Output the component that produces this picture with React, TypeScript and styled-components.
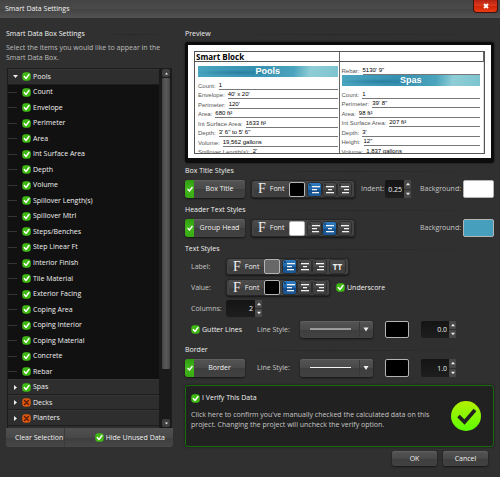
import React from 'react';
import styled, { createGlobalStyle, css } from 'styled-components';

const Global = createGlobalStyle`
  * { box-sizing: border-box; }
  html, body { margin: 0; background: #303030; }
  body, button, input, select {
    font-family: "Open Sans", "Noto Sans", sans-serif;
    font-size: 7px;
    line-height: 10px;
    color: #d6d6d6;
  }
  h1, h2, p, ul { margin: 0; padding: 0; font-size: 7px; font-weight: 400; }
  ul { list-style: none; }
  button { border: 0; padding: 0; cursor: pointer; }
`;

const raised = css`
  background: linear-gradient(#545454, #494949 50%, #3e3e3e 52%, #424242);
  box-shadow: 0 1px 2px #151515, inset 0 1px 0 #606060;
`;

const Window = styled.main`
  min-height: 100vh;
  display: flex;
  flex-direction: column;
  background: #303030;
`;

const TitleBar = styled.header`
  height: 18px;
  display: flex;
  align-items: center;
  justify-content: space-between;
  padding: 0 2px 0 5px;
  color: #f4f4f4;
  background: linear-gradient(#444, #4a4a4a 48%, #424242 50%, #535353);
`;

const CloseButton = styled.button`
  align-self: flex-start;
  width: 25px;
  height: 13px;
  display: grid;
  place-items: center;
  border: 1px solid #3a1410;
  border-top: 0;
  border-radius: 0 0 4px 4px;
  background: linear-gradient(#b32212, #e03a1c 50%, #cf2408 52%, #ea3c14);
`;

const Body = styled.div`
  flex: 1;
  display: flex;
  align-items: flex-start;
  gap: 12px;
  padding: 10px 6px 0;
`;

const Sidebar = styled.section`
  flex: 0 0 167px;
`;

const Heading = styled.h2`
  height: 12px;
  line-height: 12px;
  display: flex;
  align-items: center;
  gap: 16px;
  color: #f0f0f0;
  white-space: nowrap;
  &::after {
    content: '';
    flex: 1;
    height: 1px;
    background: linear-gradient(90deg, #303030, #282828 40%, #303030);
  }
`;

const Hint = styled.p`
  margin: 3px 0 5px;
  color: #bdbdbd;
`;

const Tree = styled.div`
  display: flex;
  height: 360px;
  margin: 0 1px;
  border: 1px solid #1c1c1c;
  border-bottom: 0;
  background: #111;
  overflow: hidden;
`;

const TreeScroll = styled.div`
  flex: 1;
  min-width: 0;
  height: 359px;
  overflow: hidden;
`;

const TreeList = styled.ul`
  height: 357px;
  display: grid;
  grid-template-rows: repeat(23, 1fr);
`;

const TreeRow = styled.li<{ $group?: boolean }>`
  display: flex;
  align-items: center;
  ${p => p.$group && css`
    background: #2e2e2e;
    box-shadow: inset 0 -1px 0 #1d1d1d, inset 0 1px 0 #353535;
  `}
`;

const NextRow = styled.div`
  height: 2px;
  background: #2e2e2e;
`;

const Branch = styled.span`
  width: 9px;
  height: 1px;
  margin-right: 5px;
  background: #343434;
`;

const Expander = styled.button`
  width: 14px;
  height: 10px;
  display: grid;
  place-items: center;
  background: none;
`;

const ScrollBar = styled.div`
  width: 12px;
  padding: 0 1px 1px 3px;
  display: flex;
  flex-direction: column;
  background: #1a1a1a;
`;

const ScrollButton = styled.button`
  height: 8px;
  display: grid;
  place-items: center;
  border-radius: 2px;
  background: #3f3f3f;
`;

const ScrollThumb = styled.div`
  flex: 0 0 291px;
  margin: 1px 0 auto;
  border-radius: 1px;
  background: linear-gradient(90deg, #444, #5a5a5a 50%, #444);
`;

const TreeFooter = styled.footer`
  height: 19px;
  display: flex;
  align-items: stretch;
  justify-content: space-between;
  padding-right: 8px;
  border-radius: 0 0 3px 3px;
  background: linear-gradient(#505050, #484848 50%, #3e3e3e 52%, #474747);
`;

const ClearButton = styled.button`
  padding: 0 1px 0 9px;
  border-right: 1px solid #3a3a3a;
  background: none;
  color: #f0f0f0;
`;

const CheckLabel = styled.label<{ $wide?: boolean }>`
  display: inline-flex;
  align-items: center;
  gap: 2px;
  min-width: ${p => (p.$wide ? '66px' : '0')};
  color: #f0f0f0;
  white-space: nowrap;
`;

const CheckWrap = styled.span`
  position: relative;
  display: inline-grid;
  width: 9px;
  height: 9px;
  flex: none;
  svg { display: block; }
`;

const CheckInput = styled.input`
  position: absolute;
  inset: 0;
  width: 100%;
  height: 100%;
  margin: 0;
  opacity: 0;
`;

const Settings = styled.div`
  flex: 1;
  min-width: 0;
  display: flex;
  flex-direction: column;
  gap: 6px;
`;

const Section = styled.section`
  display: flex;
  flex-direction: column;
  gap: 3px;
`;

const PreviewSection = styled.section`
  display: flex;
  flex-direction: column;
  gap: 2px;
  margin-bottom: -4px;
`;

const SubRows = styled.div`
  display: flex;
  flex-direction: column;
  gap: 4px;
  padding-left: 6px;
`;

const Row = styled.div<{ $compact?: boolean }>`
  display: flex;
  align-items: center;
  height: ${p => (p.$compact ? '17px' : '18px')};
`;

const Caption = styled.label<{ $w: number; $end?: boolean }>`
  width: ${p => p.$w}px;
  color: #c6c6c6;
  white-space: nowrap;
  ${p => p.$end && css`margin-left: auto;`}
`;

const IndentCaption = styled(Caption)`
  margin-left: 6px;
`;

const Toggle = styled.div`
  display: flex;
  width: 60px;
  height: 100%;
  margin-right: 6px;
  border-radius: 3px;
  overflow: hidden;
  ${raised}
`;

const ToggleCheck = styled.label`
  position: relative;
  width: 9px;
  display: grid;
  place-items: center;
  background: linear-gradient(#2f9a10, #43b81b 50%, #37a911);
`;

const ToggleButton = styled.button`
  flex: 1;
  color: #f2f2f2;
  background: none;
`;

const ToolGroup = styled.div`
  display: flex;
  align-items: center;
  height: 100%;
  padding: 0 2px;
  border-radius: 3px;
  border: 1px solid #262626;
  background: #444;
  box-shadow: 0 1px 2px #151515;
`;

const FontButton = styled.button`
  width: 35px;
  height: 100%;
  display: flex;
  align-items: center;
  gap: 4px;
  padding-left: 4px;
  color: #f0f0f0;
  background: linear-gradient(#4c4c4c, #444 50%, #3c3c3c 52%, #404040);
`;

const FontMark = styled.span`
  font: 14px/14px "Liberation Serif", serif;
  color: #f0f0f0;
`;

const Swatch = styled.button<{ $fill: string; $w: number }>`
  width: ${p => p.$w}px;
  height: ${p => (p.$w < 20 ? '15px' : '100%')};
  flex: none;
  border: 1px solid #b4b4b4;
  border-radius: 2px;
  background: ${p => p.$fill};
  margin: 0 ${p => (p.$w < 20 ? '2px' : '0')} 0 0;
`;

const AlignButton = styled.button<{ $on?: boolean }>`
  width: 15px;
  height: 15px;
  display: grid;
  place-items: center;
  border: 1px solid #2d2d2d;
  border-radius: 3px;
  background: ${p => (p.$on
    ? 'linear-gradient(#2f7cc4, #1d64a8 50%, #104a86 52%, #1c5c9c)'
    : 'linear-gradient(#4c4c4c, #454545 50%, #3b3b3b 52%, #424242)')};
`;

const CapsButton = styled(AlignButton)`
  width: 17px;
  margin-left: 2px;
  color: #f0f0f0;
  font-weight: 700;
  font-size: 8px;
`;

const Stepper = styled.div<{ $w: number }>`
  display: flex;
  width: ${p => p.$w}px;
  height: 100%;
`;

const StepInput = styled.input`
  flex: 1;
  min-width: 0;
  height: 100%;
  padding: 0 2px 0 0;
  border: 0;
  border-radius: 2px 0 0 2px;
  text-align: right;
  color: #f0f0f0;
  background: linear-gradient(#141414, #1e1e1e);
`;

const StepButtons = styled.div`
  width: 7px;
  display: grid;
  grid-template-rows: 1fr 1fr;
  gap: 1px;
  button {
    display: grid;
    place-items: center;
    border-radius: 1px;
    background: #484848;
  }
`;

const LineSelectBox = styled.div`
  position: relative;
  width: 73px;
  height: 100%;
  margin-right: 12px;
  svg { position: absolute; inset: 0; width: 100%; height: 100%; pointer-events: none; }
`;

const LineSelect = styled.select`
  appearance: none;
  width: 100%;
  height: 100%;
  border: 0;
  border-radius: 3px;
  color: transparent;
  ${raised}
`;

const PreviewFrame = styled.div`
  border: 3px solid #0c0c0c;
  border-bottom-width: 5px;
  border-radius: 3px;
  padding: 6px 6px 4px;
  background: #fff;
  box-shadow: 0 0 2px #111;
`;

const PreviewSheet = styled.div`
  display: grid;
  grid-template-columns: 1fr 1fr;
  grid-template-rows: 10px 1fr;
  height: 103px;
  overflow: hidden;
  border: 1px solid #555;
`;

const SheetTitle = styled.div`
  padding-left: 1px;
  border-bottom: 1px solid #555;
  border-right: 1px solid #666;
  font: 700 8px/9px "Open Sans", sans-serif;
  color: #000;
`;

const SheetColumn = styled.div<{ $left?: boolean }>`
  min-width: 0;
  padding: ${p => (p.$left ? '4px 1px 0 3px' : '3px 3px 0 2px')};
  border-right: 1px solid ${p => (p.$left ? '#666' : '#ddd')};
`;

const Banner = styled.div`
  height: 11px;
  margin: 0 0 3px;
  text-align: center;
  font: 700 9px/11px "Liberation Sans", Arial, sans-serif;
  color: #fff;
  background:
    radial-gradient(ellipse at 30% 60%, #2a7f9f 0, transparent 32%),
    linear-gradient(100deg, #4aa5bf, #3690b0 40%, #4ba4bd 68%, #8fcdd6 80%, #7cc4cf);
`;

const Facts = styled.div<{ $n: number }>`
  display: grid;
  grid-auto-rows: 1fr;
  height: ${p => p.$n}px;
`;

const Fact = styled.div`
  display: flex;
  align-items: flex-end;
  gap: 3px;
  white-space: nowrap;
  font: 6px/8px "Liberation Sans", Arial, sans-serif;
  span { color: #555; }
  b { flex: 1; font-weight: 400; color: #000; border-bottom: 1px solid #777; }
`;

const VerifyBox = styled.section`
  display: flex;
  align-items: center;
  justify-content: space-between;
  height: 62px;
  margin-top: 2px;
  padding: 0 12px 0 5px;
  border: 1px solid #176b0c;
  border-radius: 3px;
  background: #212121;
  box-shadow: 0 0 2px #111;
`;

const VerifyText = styled.div`
  align-self: flex-start;
  padding-top: 7px;
  p { margin-top: 4px; color: #c6c6c6; }
`;

const Actions = styled.div`
  display: flex;
  justify-content: flex-end;
  gap: 6px;
  margin-top: -2px;
  padding-right: 6px;
`;

const ActionButton = styled.button`
  width: 45px;
  height: 15px;
  border-radius: 3px;
  color: #f0f0f0;
  ${raised}
`;

function Tick({ off }: { off?: boolean }) {
  return (
    <svg width="9" height="9" viewBox="0 0 18 18" aria-hidden="true">
      <rect x="0.5" y="0.5" width="17" height="17" rx="6" fill={off ? '#d9570f' : '#3fb911'} />
      {off
        ? <path d="M5 5l8 8M13 5l-8 8" stroke="#5e1c00" strokeWidth="2.6" strokeLinecap="round" />
        : <path d="M4.5 9l3.5 4 6-8" fill="none" stroke="#fff" strokeWidth="2.8" strokeLinecap="round" strokeLinejoin="round" />}
    </svg>
  );
}

function Check({ label, off, wide }: { label: string; off?: boolean; wide?: boolean }) {
  return (
    <CheckLabel $wide={wide}>
      <CheckWrap>
        <Tick off={off} />
        <CheckInput type="checkbox" defaultChecked={!off} />
      </CheckWrap>
      {label}
    </CheckLabel>
  );
}

function Arrow({ dir, size = 5 }: { dir: 'up' | 'down' | 'right'; size?: number }) {
  const d = { up: 'M0 8L5 2l5 6z', down: 'M0 2h10L5 8z', right: 'M2 0l6 5-6 5z' }[dir];
  return <svg width={size} height={size} viewBox="0 0 10 10" aria-hidden="true"><path d={d} fill="#eee" /></svg>;
}

type Align = 'left' | 'center' | 'right';

const alignBars: Record<Align, number[][]> = {
  left: [[3, 8], [3, 5], [3, 7]],
  center: [[2, 8], [4, 4], [2, 8]],
  right: [[2, 8], [5, 5], [3, 7]],
};

function AlignIcon({ kind }: { kind: Align }) {
  return (
    <svg width="12" height="11" viewBox="0 0 12 11" aria-hidden="true">
      <circle cx="1" cy="1" r="0.8" fill="#111" />
      {alignBars[kind].map(([x, w], i) => <rect key={i} x={x} y={2 + i * 3} width={w} height="1.3" fill="#f2f2f2" />)}
    </svg>
  );
}

function FontTools({ color, align, caps }: { color: string; align: Align; caps?: boolean }) {
  return (
    <ToolGroup>
      <FontButton><FontMark aria-hidden="true">F</FontMark>Font</FontButton>
      <Swatch $w={16} $fill={color} aria-label="Font color" />
      {(['left', 'center', 'right'] as Align[]).map(k => (
        <AlignButton key={k} $on={k === align} aria-label={`Align ${k}`}><AlignIcon kind={k} /></AlignButton>
      ))}
      {caps && <CapsButton>TT</CapsButton>}
    </ToolGroup>
  );
}

function NumberStepper({ id, value, width, label }: { id: string; value: string; width: number; label?: string }) {
  return (
    <Stepper $w={width}>
      <StepInput id={id} aria-label={label} defaultValue={value} />
      <StepButtons>
        <button aria-label="Increase"><Arrow dir="up" size={4} /></button>
        <button aria-label="Decrease"><Arrow dir="down" size={4} /></button>
      </StepButtons>
    </Stepper>
  );
}

function SectionToggle({ label }: { label: string }) {
  return (
    <Toggle>
      <ToggleCheck>
        <svg width="8" height="8" viewBox="0 0 16 16" aria-hidden="true">
          <path d="M3 8l4 4 6-8" fill="none" stroke="#fff" strokeWidth="2.6" />
        </svg>
        <CheckInput type="checkbox" defaultChecked aria-label={label} />
      </ToggleCheck>
      <ToggleButton>{label}</ToggleButton>
    </Toggle>
  );
}

function LinePicker({ id }: { id: string }) {
  return (
    <LineSelectBox>
      <LineSelect id={id}><option>Solid</option></LineSelect>
      <svg viewBox="0 0 73 18" preserveAspectRatio="none" aria-hidden="true">
        <path d="M10 8.500h41" stroke="#f4f4f4" strokeWidth="1" />
        <path d="M59.5 1v16" stroke="#383838" />
        <path d="M63.500 7h5l-2.500 4z" fill="#f0f0f0" />
      </svg>
    </LineSelectBox>
  );
}

const poolItems = ['Count', 'Envelope', 'Perimeter', 'Area', 'Int Surface Area', 'Depth', 'Volume',
  'Spillover Length(s)', 'Spillover Mtrl', 'Steps/Benches', 'Step Linear Ft', 'Interior Finish',
  'Tile Material', 'Exterior Facing', 'Coping Area', 'Coping Interior', 'Coping Material', 'Concrete', 'Rebar'];

const poolFacts = [['Count:', '1'], ['Envelope:', "40' x 20'"], ['Perimeter:', "120'"], ['Area:', '680 ft²'],
  ['Int Surface Area:', '1633 ft²'], ['Depth:', `3' 6" to 5' 6"`], ['Volume:', '19,562 gallons'],
  ['Spillover Length(s):', "2'"]];

const spaFacts = [['Count:', '1'], ['Perimeter:', `39' 8"`], ['Area:', '98 ft²'], ['Int Surface Area:', '207 ft²'],
  ['Depth:', "3'"], ['Height:', '12"'], ['Volume:', '1,837 gallons']];

function GroupRow({ label, open, off }: { label: string; open?: boolean; off?: boolean }) {
  return (
    <TreeRow $group>
      <Expander aria-label={`Expand ${label}`}><Arrow dir={open ? 'down' : 'right'} /></Expander>
      <Check label={label} off={off} />
    </TreeRow>
  );
}

export default function App() {
  return (
    <Window>
      <Global />
      <TitleBar>
        <h1>Smart Data Settings</h1>
        <CloseButton aria-label="Close">
          <svg width="6" height="6" viewBox="0 0 6 6"><path d="M1 1l4 4M5 1L1 5" stroke="#fff" strokeWidth="1.8" /></svg>
        </CloseButton>
      </TitleBar>
      <Body>
        <Sidebar>
          <Heading>Smart Data Box Settings</Heading>
          <Hint>Select the items you would like to appear in the Smart Data Box.</Hint>
          <Tree>
            <TreeScroll>
              <TreeList>
                <GroupRow label="Pools" open />
                {poolItems.map(t => <TreeRow key={t}><Branch /><Check label={t} /></TreeRow>)}
                <GroupRow label="Spas" />
                <GroupRow label="Decks" off />
                <GroupRow label="Planters" off />
              </TreeList>
              <NextRow />
            </TreeScroll>
            <ScrollBar>
              <ScrollButton aria-label="Scroll up"><Arrow dir="up" size={3} /></ScrollButton>
              <ScrollThumb />
              <ScrollButton aria-label="Scroll down"><Arrow dir="down" size={3} /></ScrollButton>
            </ScrollBar>
          </Tree>
          <TreeFooter>
            <ClearButton>Clear Selection</ClearButton>
            <Check label="Hide Unused Data" />
          </TreeFooter>
        </Sidebar>

        <Settings>
          <PreviewSection>
            <Heading>Preview</Heading>
            <PreviewFrame>
              <PreviewSheet>
                <SheetTitle>Smart Block</SheetTitle>
                <SheetTitle />
                <SheetColumn $left>
                  <Banner>Pools</Banner>
                  <Facts $n={76}>{poolFacts.map(([k, v]) => <Fact key={k}><span>{k}</span><b>{v}</b></Fact>)}</Facts>
                </SheetColumn>
                <SheetColumn>
                  <Facts $n={10}><Fact><span>Rebar:</span><b>5130' 9"</b></Fact></Facts>
                  <Banner>Spas</Banner>
                  <Facts $n={67}>{spaFacts.map(([k, v]) => <Fact key={k}><span>{k}</span><b>{v}</b></Fact>)}</Facts>
                </SheetColumn>
              </PreviewSheet>
            </PreviewFrame>
          </PreviewSection>

          <Section>
            <Heading>Box Title Styles</Heading>
            <Row>
              <SectionToggle label="Box Title" />
              <FontTools color="#000" align="left" />
              <IndentCaption $w={24} htmlFor="indent">Indent:</IndentCaption>
              <NumberStepper id="indent" value="0.25" width={26} />
              <Caption $w={43} $end htmlFor="title-bg">Background:</Caption>
              <Swatch id="title-bg" $w={31} $fill="#fff" />
            </Row>
          </Section>

          <Section>
            <Heading>Header Text Styles</Heading>
            <Row>
              <SectionToggle label="Group Head" />
              <FontTools color="#fff" align="center" />
              <Caption $w={43} $end htmlFor="head-bg">Background:</Caption>
              <Swatch id="head-bg" $w={31} $fill="#459fbd" />
            </Row>
          </Section>

          <Section>
            <Heading>Text Styles</Heading>
            <SubRows>
              <Row $compact>
                <Caption as="span" $w={35}>Label:</Caption>
                <FontTools color="#686868" align="left" caps />
              </Row>
              <Row $compact>
                <Caption as="span" $w={35}>Value:</Caption>
                <FontTools color="#000" align="left" />
                <Caption as="span" $w={6} />
                <Check label="Underscore" />
              </Row>
              <Row $compact>
                <Caption $w={35} htmlFor="columns">Columns:</Caption>
                <NumberStepper id="columns" value="2" width={36} />
              </Row>
              <Row $compact>
                <Check label="Gutter Lines" wide />
                <Caption $w={43} htmlFor="gutter-line">Line Style:</Caption>
                <LinePicker id="gutter-line" />
                <Swatch $w={24} $fill="#000" aria-label="Gutter color" />
                <Caption as="span" $w={12} />
                <NumberStepper id="gutter-width" label="Gutter width" value="0.0" width={35} />
              </Row>
            </SubRows>
          </Section>

          <Section>
            <Heading>Border</Heading>
            <Row>
              <SectionToggle label="Border" />
              <Caption as="span" $w={6} />
              <Caption $w={43} htmlFor="border-line">Line Style:</Caption>
              <LinePicker id="border-line" />
              <Swatch $w={24} $fill="#000" aria-label="Border color" />
              <Caption as="span" $w={12} />
              <NumberStepper id="border-width" label="Border width" value="1.0" width={35} />
            </Row>
          </Section>

          <VerifyBox>
            <VerifyText>
              <Check label="I Verify This Data" />
              <p>Click here to confirm you've manually checked the calculated data on this<br />project. Changing the project will uncheck the verify option.</p>
            </VerifyText>
            <svg width="30" height="30" viewBox="0 0 30 30" aria-hidden="true">
              <defs>
                <linearGradient id="lime" x1="0" y1="0" x2="0" y2="1">
                  <stop offset="0" stopColor="#b4f000" /><stop offset="1" stopColor="#5cff00" />
                </linearGradient>
              </defs>
              <circle cx="15" cy="15" r="15" fill="url(#lime)" />
              <path d="M7.500 15l6 6L24 9" fill="none" stroke="#212121" strokeWidth="3.600" />
            </svg>
          </VerifyBox>
          <Actions>
            <ActionButton>OK</ActionButton>
            <ActionButton>Cancel</ActionButton>
          </Actions>
        </Settings>
      </Body>
    </Window>
  );
}
